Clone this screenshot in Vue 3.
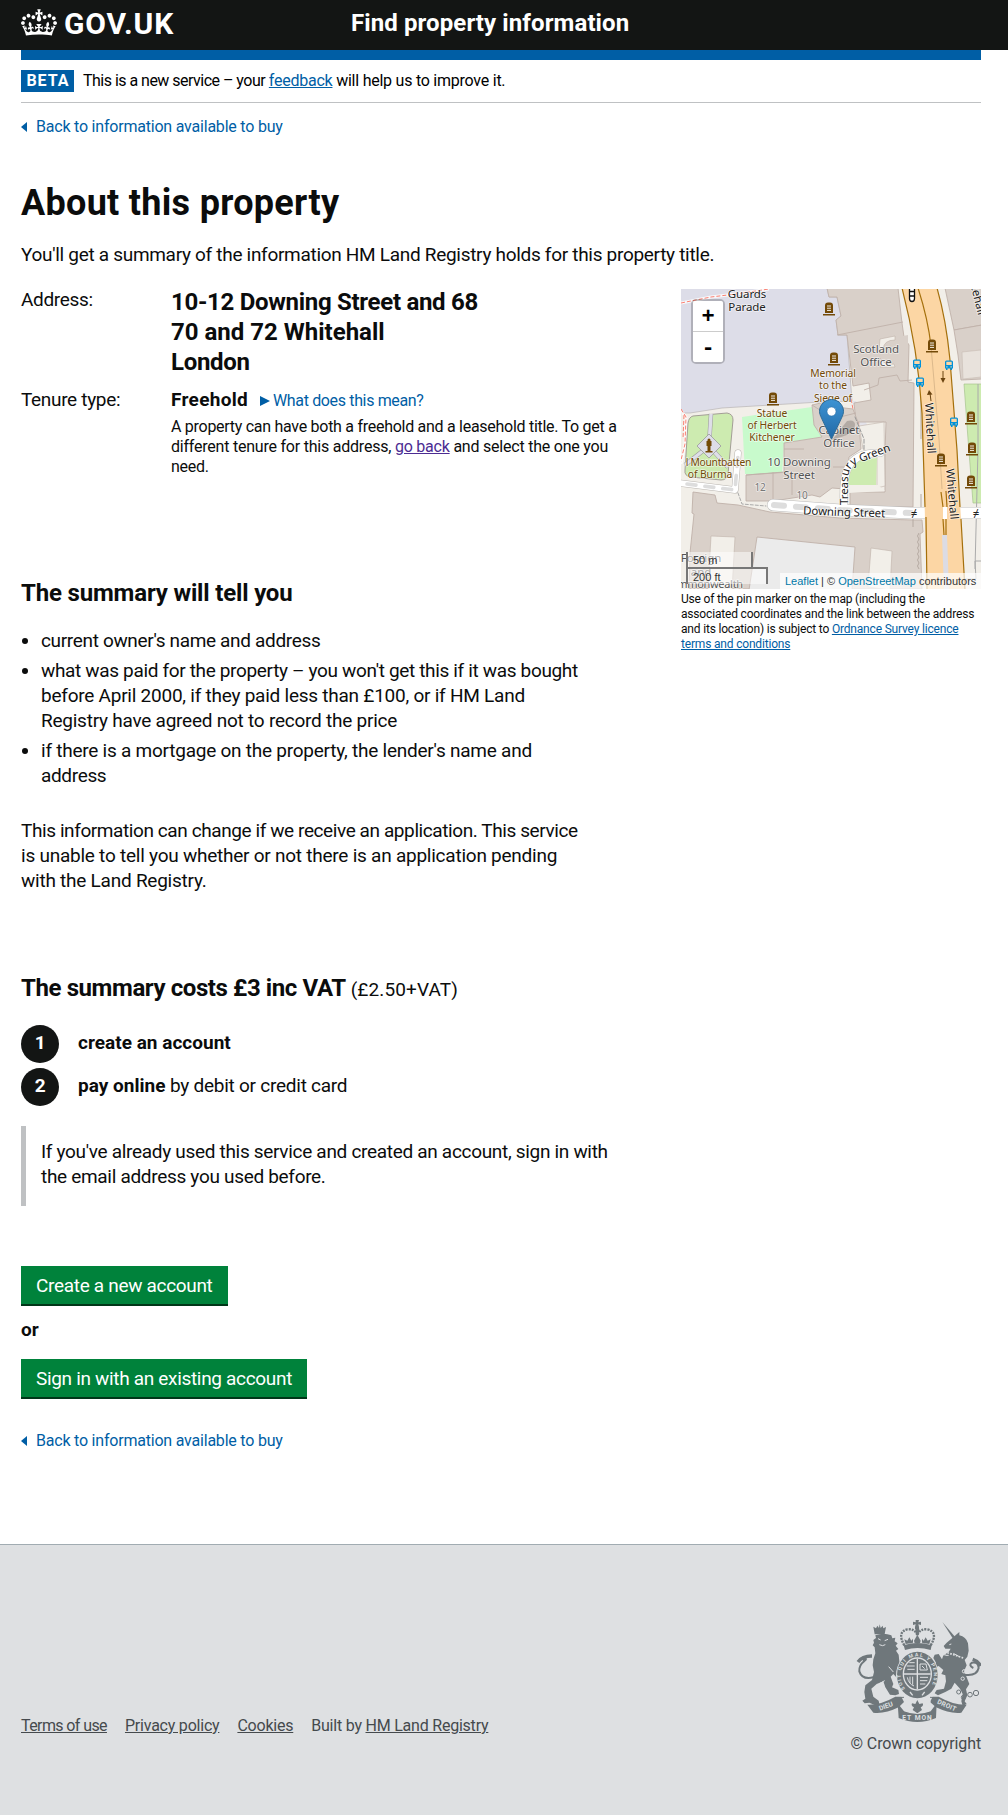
<script setup>
const memorials = [
  [148, 20], [153, 70], [92, 110], [251, 57], [290, 129], [291, 160], [260, 171], [290, 193],
]
const busStops = [[236, 75], [268, 76], [239, 93], [273, 133]]
</script>

<template>
  <header class="site-header">
    <div class="wrap header-row">
      <a class="logo" href="#">
        <svg class="crown" viewBox="0 0 132 97" width="36" height="27" aria-hidden="true">
          <path fill="#fff" d="M25 30.2c3.5 1.5 7.7-.2 9.1-3.7 1.5-3.6-.2-7.8-3.9-9.2-3.6-1.4-7.6.3-9.1 3.9-1.4 3.5.3 7.5 3.9 9zM9 39.5c3.6 1.5 7.8-.2 9.2-3.7 1.5-3.6-.2-7.8-3.9-9.1-3.6-1.5-7.6.2-9.1 3.8-1.4 3.5.3 7.5 3.8 9zM4.4 57.2c3.5 1.5 7.7-.2 9.1-3.8 1.5-3.6-.2-7.7-3.9-9.1-3.5-1.5-7.6.3-9.1 3.8-1.4 3.5.3 7.6 3.9 9.1zm38.3-21.4c3.5 1.5 7.7-.2 9.1-3.8 1.5-3.6-.2-7.7-3.9-9.1-3.6-1.5-7.6.3-9.1 3.8-1.3 3.6.4 7.7 3.9 9.1zm64.4-5.6c-3.6 1.5-7.8-.2-9.1-3.7-1.5-3.6.2-7.8 3.8-9.2 3.6-1.4 7.7.3 9.2 3.9 1.3 3.5-.4 7.5-3.9 9zm15.9 9.3c-3.6 1.5-7.7-.2-9.1-3.7-1.5-3.6.2-7.8 3.7-9.1 3.6-1.5 7.7.2 9.2 3.8 1.5 3.5-.3 7.5-3.8 9zm4.7 17.7c-3.6 1.5-7.8-.2-9.2-3.8-1.5-3.6.2-7.7 3.9-9.1 3.6-1.5 7.7.3 9.2 3.8 1.3 3.5-.4 7.6-3.9 9.1zM89.3 35.8c-3.6 1.5-7.8-.2-9.2-3.8-1.4-3.6.2-7.7 3.9-9.1 3.6-1.5 7.7.3 9.2 3.8 1.4 3.6-.3 7.7-3.9 9.1zM69.7 17.7l8.9 4.7V9.3l-8.9 2.8c-.2-.3-.5-.6-.9-.9L72.4 0H59.6l3.5 11.2c-.3.3-.6.5-.9.9l-8.8-2.8v13.1l8.8-4.7c.3.3.6.7.9.9l-5 15.4v.1c-.2.8-.4 1.6-.4 2.4 0 4.1 3.1 7.5 7 8.1h.2c.3 0 .7.1 1 .1.4 0 .7 0 1-.1h.2c4-.6 7.1-4.1 7.1-8.1 0-.8-.1-1.7-.4-2.4V34l-5.1-15.4c.4-.2.7-.6 1-.9zM66 92.8c16.9 0 32.8 1.1 47.1 3.2 4-16.9 8.9-26.7 14-33.5l-9.6-3.4c1 4.9 1.1 7.2 0 10.2-1.5-1.4-3-4.3-4.2-8.7L108.6 76c2.8-2 5-3.2 7.5-3.3-4.4 9.4-10 11.9-13.6 11.2-4.3-.8-6.3-4.6-5.6-7.9 1-4.7 5.7-5.9 8-.5 4.3-8.7-3-11.4-7.6-8.8 7.1-7.2 7.9-13.5 2.1-21.1-8 6.1-8.1 12.3-4.5 20.8-4.7-5.4-12.1-2.5-9.5 6.2 3.4-5.2 7.9-2 7.2 3.1-.6 4.3-6.4 7.8-13.5 7.2-10.3-.9-10.9-8-11.2-13.8 2.5-.5 7.1 1.8 11 7.3L80.2 60c-4.1 4.4-8 5.3-12.3 5.4 1.4-4.4 8-11.6 8-11.6H55.5s6.4 7.2 7.9 11.6c-4.2-.1-8-1-12.3-5.4l1.4 16.4c3.9-5.5 8.5-7.7 10.9-7.3-.3 5.8-.9 12.8-11.1 13.8-7.2.6-12.9-2.9-13.5-7.2-.7-5 3.8-8.3 7.1-3.1 2.7-8.7-4.6-11.6-9.4-6.2 3.7-8.5 3.6-14.7-4.6-20.8-5.8 7.6-5 13.9 2.2 21.1-4.7-2.6-11.9.1-7.7 8.8 2.3-5.5 7.1-4.2 8.1.5.7 3.3-1.3 7.1-5.7 7.9-3.5.7-9-1.8-13.5-11.2 2.5.1 4.7 1.3 7.5 3.3l-4.7-15.4c-1.2 4.4-2.7 7.2-4.3 8.7-1.1-3-.9-5.3 0-10.2l-9.5 3.4c5 6.9 9.9 16.7 14 33.5 14.8-2.1 30.8-3.2 47.7-3.2z" />
        </svg>
        <span class="logo-text">GOV.UK</span>
      </a>
      <span class="service-name">Find property information</span>
    </div>
  </header>

  <div class="wrap">
    <div class="blue-bar"></div>
    <div class="phase-banner">
      <strong class="phase-tag">BETA</strong>
      <span><span class="snug">This is a new service – your</span> <a href="#">feedback</a> will help us to improve it.</span>
    </div>
    <a class="back-link back-top" href="#">Back to information available to buy</a>

    <main>
      <h1>About this property</h1>
      <p class="intro">You'll get a summary of the information HM Land Registry holds for this property title.</p>

      <div class="property">
        <dl class="facts">
          <dt>Address:</dt>
          <dd class="address">10-12 Downing Street and 68<br><span class="line-2">70 and 72 Whitehall</span><br>London</dd>
          <dt class="tenure-label">Tenure type:</dt>
          <dd class="tenure">
            <div class="tenure-line">
              <b>Freehold</b>
              <a class="disclosure" href="#"><i class="caret"></i>What does this mean?</a>
            </div>
            <p class="tenure-help">A property can have both a freehold and a leasehold title. To get a<br><span class="loose">different tenure for this address, <a class="visited" href="#">go back</a> and select the one you</span><br>need.</p>
          </dd>
        </dl>

        <aside class="map-col">
          <div class="map">
            <svg class="tiles" viewBox="0 0 300 300" width="300" height="300">
              <rect width="300" height="300" fill="#f2efe9" />
              <!-- parade ground -->
              <path fill="#dddde8" stroke="#b9b4b4" stroke-width=".7" d="M-1-1H146L148 8 156 8 160 27 155 31 157 46 166 46 171 112 139 113 41 119 9 124-1 124z" />
              <path fill="#dddde8" d="M171 112h4l14 30-2 15-5-12z" opacity=".7" />
              <g fill="none" stroke="#fff" stroke-width="3" opacity=".8">
                <path d="M0 14 30 8 55 5 88 0M0 122 5 128 4 155 0 175" />
              </g>
              <g fill="none" stroke="#fa8072" stroke-width="1" stroke-dasharray="4 2">
                <path d="M0 14 30 8 55 5 88 0M0 120 5 128 4 155-1 175M3 126 2 150" />
                <path d="M170 110 173 125 178 135" />
              </g>
              <!-- garden -->
              <path fill="#cdebb0" stroke="#a39e96" stroke-width="1" d="M12 127 46 124Q52 125 52 131L47 185Q46 191 40 191L10 188Q3 187 4 181L7 134Q8 128 12 127z" />
              <g fill="none" stroke="#9b9b9b" stroke-width="4.4"><path d="M30 125 28 157 4 176M28 157 47 178" /></g>
              <g fill="none" stroke="#dedee8" stroke-width="3.4"><path d="M30 125 28 157 4 176M28 157 47 178" /></g>
              <path fill="#dddde8" stroke="#999" stroke-width=".8" d="M28 145 40 157 28 169 16 157z" />
              <path fill="#734a08" d="M26.500 151a1.500 1.500 0 0 1 3 0v1h1v5h-1v5h2v1.500h-7V162h2v-5h-1v-5h1z" />
              <!-- lawns -->
              <path fill="#c8facc" d="M61 128 131 118 134 136 141 148 103 154 101 185 64 185z" />
              <path fill="#cdebb0" stroke="#9dbc85" stroke-width=".6" d="M283 95H301V214H292L287 150z" />
              <path fill="none" stroke="#aaa" d="M297 95 297 160 296 200 294 280M284 290 295 290 294 272 300 272" />

              <!-- buildings -->
              <g fill="#d9d0c9" stroke="#c0b1a9" stroke-width=".9">
                <path d="M146-1 148 8 156 8 160 27 155 31 157 46 166 46 172 97 188 94 190 111 173 114 175 133 205 133 204 163 204 203 196 203 169 203 169 218 232 218 233 94 227 93 228 56 223 48 221 34 217-1z" />
                <path d="M131 116 144 113 155 118 172 120 178 136 180 160 168 168 164 200 151 199 139 208 131 206 92 212 65 212 65 186 103 183 103 154 141 148 133 136z" />
                <path d="M12 203 34 206 36 214 57 216 89 223 159 229 232 231 241 231 242 243 239 245 241 300 8 300 9 264 13 225 11 224z" />
                <path d="M264-1 273 41 301 36V-1z" />
                <path d="M273 41 277 66 280 91 301 90V36z" />
                <path fill="none" d="M156 46 222 33M183 101 197 96 198 89 216 86 219 92 231 91M92 183V212M111 183V206M65 186 108 183M155 129 175 124M152 178 166 178M131 116 150 128M123 160 103 160" />
              </g>
              <path fill="#d9d0c9" d="M222 47l5-1v10l-5 1z" />
              <g fill="#f2efe9" stroke="#c0b1a9" stroke-width=".6">
                <path d="M178 137 203 133 204 197 196 199 196 168 182 160z" />
                <path d="M30 247 54 248 51 301H27z" />
                <path d="M190 259 211 262 209 301 187 298z" />
                <path d="M199 50 214 47 214 51Q203 51 202 60L198 61zM199 69Q204 77 213 75L214 78 199 78z" />
                <path d="M281 63 300 61V88L282 90z" opacity=".6" />
                <path stroke="none" d="M166 197 197 196 204 202 168 204z" />
              </g>
              <path fill="#cdebb0" d="M168 172 196 169 195 196 167 196z" />
              <path fill="#ebebeb" stroke="#c0b1a9" stroke-width=".9" d="M76 248 174 258 171 301H68z" />
              <path fill="none" stroke="#b5aaa2" d="M232 225V238M240 94V150M240 205V220M238 244q-3 3 0 6q-3 3 0 6q-3 3 0 6q-3 3 0 6q-3 3 0 6q-3 3 0 6" />

              <!-- footways -->
              <g fill="none" stroke-linecap="round" stroke-linejoin="round">
                <path stroke="#b9b5b0" stroke-width="7" d="M-2 194 54 201 57 164" />
                <path stroke="#fff" stroke-width="6" d="M-2 194 54 201 57 164" />
                <path stroke="#ddd" stroke-width="3.600" stroke-dasharray="9 9" d="M6 195 54 201 57 166" />
                <path stroke="#aaa" stroke-width="1" stroke-dasharray="3 2" d="M57 204 61 215 85 217" />
                <path stroke="#999" stroke-width="1" stroke-dasharray="4 2" d="M174 128 183 150 183 160" />
              </g>

              <!-- Downing Street and Treasury Green -->
              <g fill="none" stroke-linecap="round">
                <path stroke="#bbb" stroke-width="12" d="M92 216 160 221 230 224H301" />
                <path stroke="#bbb" stroke-width="8" d="M163 218Q161 185 170 174T199 164" />
                <path stroke="#fff" stroke-width="7" d="M163 218Q161 185 170 174T199 164" />
                <path stroke="#fff" stroke-width="11" d="M92 216 160 221 230 224H301" />
                <path stroke="#ddd" stroke-width="6" stroke-dasharray="10 12" d="M93 216 160 221 230 224" />
              </g>

              <!-- Whitehall -->
              <path fill="#fcd6a4" d="M221-1Q237 60 241 124L246 301H284L276 161 269 71Q265 30 256-1z" />
              <path fill="none" stroke="#a5700c" stroke-width="1.200" d="M221-1Q237 60 241 124L244 218M245 228 246 301M256-1Q265 30 269 71L276 161 279 218M280 230 284 301M237-1Q247 30 250 57M260 203 262 218M265 202 266 218M262 230 263 246M265 230 265 246" />
              <path fill="none" stroke="#dcb98c" stroke-width="1" d="M250 57 258 150 261 200" />
              <path fill="#dcdce4" d="M261 246 266 246 268 301 263 301z" />
              <path fill="#fff" d="M262 218h4v12h-4z" />

              <!-- point icons -->
              <g v-for="([x, y], i) in memorials" :key="'m' + i" :transform="`translate(${x} ${y})`">
                <path fill="#734a08" d="M-4-3.500Q-4-6.500-1-6.500H1Q4-6.500 4-3.500V4H-4zM-6 5H6V6.500H-6z" />
                <path stroke="#fff" stroke-width=".9" d="M-2-3H2M-2-.8H2M-2 1.400H2" />
              </g>
              <g v-for="([x, y], i) in busStops" :key="'b' + i" :transform="`translate(${x} ${y})`">
                <path fill="#0092da" d="M-4-3Q-4-4.500-2.500-4.500H2.500Q4-4.500 4-3V3.500H3V5H1.500V3.500H-1.500V5H-3V3.500H-4z" />
                <path fill="#fcd6a4" d="M-2.700-3.200H2.700V0H-2.700zM-2.700 1.200h1.200v1.200h-1.200zM1.500 1.200h1.200v1.200h-1.200z" />
              </g>
              <g stroke="#6b4410" fill="#6b4410"><path d="M262 82V90" /><path stroke="none" d="M259.500 89h5L262 94z" /><path d="M250 112 249 104" /><path stroke="none" d="M246 106l2-5 3.500 4.500z" /></g>
              <g fill="#fff" stroke="#111" stroke-width="1.300"><path d="M228.500-1V9.500q0 3 2.500 3t2.500-3V-1z" /><path fill="none" d="M228.500 2.500h5M228.500 7h5" /></g>

              <!-- labels -->
              <g class="lbl dark">
                <text x="66" y="8.500">Guards</text><text x="66" y="22">Parade</text>
                <text x="163" y="227" transform="rotate(2 163 227)">Downing Street</text>
                <text transform="translate(244 114) rotate(87)" class="start long">Whitehall</text>
                <text transform="translate(265 180) rotate(85)" class="start long">Whitehall</text>
                <text transform="translate(285 -22) rotate(76)" class="start">Whitehall</text>
                <path id="tg" fill="none" stroke="none" d="M167 216V192Q167 177 178 174L215 160" />
                <text class="start"><textPath href="#tg">Treasury Green</textPath></text>
                <text x="233" y="228">≠</text><text x="295" y="228">≠</text>
              </g>
              <g class="lbl grey">
                <text x="195" y="64">Scotland</text><text x="195" y="77">Office</text>
                <text x="158" y="145">Cabinet</text><text x="158" y="158">Office</text>
                <text x="118" y="177">10 Downing</text><text x="118" y="190">Street</text>
                <text x="20" y="273">Foreign</text><text x="20" y="287">and</text><text x="29" y="299" class="small">mmonwealth</text>
              </g>
              <g class="lbl num"><text x="79" y="202">12</text><text x="121" y="210">10</text></g>
              <g class="lbl brown">
                <text x="152" y="88">Memorial</text><text x="152" y="100">to the</text><text x="152" y="113">Siege of</text><text x="152" y="125">Kut</text>
                <text x="91" y="128">Statue</text><text x="91" y="140">of Herbert</text><text x="91" y="152">Kitchener</text>
                <text x="70" y="177" class="end">l Mountbatten</text><text x="29" y="189">of Burma</text>
              </g>

              <!-- pin -->
              <defs><linearGradient id="pin" x1="0" y1="0" x2="0" y2="1"><stop offset="0" stop-color="#3d93d3" /><stop offset="1" stop-color="#2269a5" /></linearGradient></defs>
              <g transform="translate(138 110)">
                <path fill="#000" opacity=".18" d="M13 41 28 22Q36 20 36 26T28 36z" />
                <path fill="url(#pin)" stroke="#2e6c97" d="M12.500.5C5.900.5.5 5.900.5 12.300c0 2.200.9 4.500 2 6.800L12.500 40.200l10-21.100c1.100-2.300 2-4.600 2-6.800C24.500 5.900 19.100.5 12.500.5z" />
                <circle cx="12.500" cy="12.500" r="4.500" fill="#fff" stroke="#2a6fa8" stroke-width=".6" />
              </g>
            </svg>

            <div class="zoom"><a href="#">+</a><a href="#">-</a></div>
            <div class="scale"><span class="metric">50 m</span><span class="imperial">200 ft</span></div>
            <div class="credit"><a href="#">Leaflet</a> | © <a href="#">OpenStreetMap</a> contributors</div>
          </div>
          <p class="map-note">Use of the pin marker on the map (including the<br>associated coordinates and the link between the address<br>and its location) is subject to <a href="#">Ordnance Survey licence<br>terms and conditions</a></p>
        </aside>
      </div>

      <section class="tells">
        <h2>The summary will tell you</h2>
        <ul>
          <li>current owner's name and address</li>
          <li>what was paid for the property – you won't get this if it was bought<br><span class="loose">before April 2000, if they paid less than £100, or if HM Land<br>Registry have agreed not to record the price</span></li>
          <li><span class="loose">if there is a mortgage on the property, the lender's name and</span><br>address</li>
        </ul>
        <p><span class="tight">This information can change if we receive an application. This service</span><br><span class="loose">is unable to tell you whether or not there is an application pending<br>with the Land Registry.</span></p>
      </section>

      <section class="costs">
        <h2>The summary costs £3 inc VAT <span>(£2.50+VAT)</span></h2>
        <ol class="steps">
          <li><span class="step-no">1</span><span><b>create an account</b></span></li>
          <li><span class="step-no">2</span><span><b>pay online</b> by debit or credit card</span></li>
        </ol>
        <p class="inset">If you've already used this service and created an account, sign in with<br>the email address you used before.</p>
      </section>

      <div class="actions">
        <button type="button">Create a new account</button>
        <b class="or">or</b>
        <button type="button">Sign in with an existing account</button>
      </div>
      <a class="back-link" href="#">Back to information available to buy</a>
    </main>
  </div>

  <footer>
    <div class="wrap footer-row">
      <nav class="footer-links">
        <a class="terms" href="#">Terms of use</a>
        <a href="#">Privacy policy</a>
        <a href="#">Cookies</a>
        <span>Built by <a href="#">HM Land Registry</a></span>
      </nav>
      <div class="crest-col">
        <svg class="crest" viewBox="78 60 375 306" width="125" height="102" aria-hidden="true">
          <g fill="#6f777b">
            <!-- central crown -->
            <path d="M257 60h10l-2 7 8-2v10l-8-2 2 8v6h-12v-6l2-8-8 2V65l8 2z" />
            <path d="M256 86h12l-2 20h-8zM221 136Q262 122 305 136L302 150Q262 138 225 150z" />
            <path d="M232 122l6-10 6 10 5-6v12l-22 4-4-14zM293 122l-6-10-6 10-5-6v12l22 4 4-14zM252 122l10-18 10 18-2 8h-16z" />
            <!-- lion -->
            <path d="M130 80l8 5 4-8 5 7 2-11 3 11 6-7 2 8 8-4-4 21-30 1z" />
            <path d="M136 106Q160 96 184 106L187 115 196 113 194 124 203 130 197 137 205 147 198 152 206 164 208 184 212 196 205 212 212 224 203 236 190 222 182 230 190 252 186 262 205 270 207 282 196 286 180 284 166 262 160 244 140 252 124 266 130 290 146 302 148 312 136 316 118 308 104 310 97 302 106 296 103 276 106 256 126 240 132 216 128 196 130 178 136 160 134 142 128 136 132 128 130 120 138 114z" />
            <!-- unicorn -->
            <path d="M337 66 378 114 370 118z" />
            <path d="M350 128 374 108 388 96 388 106Q408 110 414 130L416 152 412 170 404 180 410 196 402 214 410 232 418 252 408 268 412 286 404 304 410 312 398 318 394 304 398 282 390 266 374 248 364 266 346 276 324 286 314 280 320 270 342 266 348 244 346 226 334 222 340 210 326 198 312 204 306 194 318 188 310 174 314 164 326 162 336 178 340 166 356 156 362 146 346 146 341 138z" />
            <!-- ribbon -->
            <path d="M112 314Q150 316 196 290L214 290 222 306 206 322Q165 342 130 338zM410 314Q372 316 326 290L308 290 300 306 318 322Q360 342 394 338z" />
            <path d="M203 310 222 334Q262 350 302 334L320 310 318 354Q262 378 206 354z" />
          </g>
          <path fill="#dee0e2" d="M222 302Q262 316 302 302L298 334Q262 344 226 334z" />
          <path fill="#6f777b" d="M262 300l6 12 10-2q4 8-6 12l4 8-14 10-14-10 4-8q-10-4-6-12l10 2z" />
          <g fill="none" stroke="#6f777b">
            <path stroke-width="7" stroke-dasharray="6 3" d="M223 136Q200 96 232 88 254 86 262 104M302 136Q326 96 292 88 270 86 262 104" />
            <path stroke-width="6" d="M130 232Q96 240 88 214 86 196 104 182 114 172 98 180M402 224Q440 230 446 204 444 184 426 188 414 196 430 204" />
            <path stroke-width="10" d="M84 186Q96 168 126 168M428 178Q446 184 452 198" />
            <path stroke-width="3" d="M206 310Q200 290 222 292M318 310Q322 290 300 292" />
            <g stroke-width="3">
              <circle cx="386" cy="276" r="6" /><circle cx="400" cy="292" r="6" /><circle cx="420" cy="284" r="7" /><circle cx="438" cy="279" r="8" /><circle cx="404" cy="254" r="6" />
            </g>
          </g>
          <!-- shield and garter -->
          <ellipse cx="262" cy="226" rx="64" ry="72" fill="#dee0e2" />
          <ellipse cx="262" cy="225" rx="61" ry="70" fill="#6f777b" />
          <ellipse cx="262" cy="222" rx="44" ry="50" fill="#dee0e2" />
          <ellipse cx="262" cy="222" rx="40" ry="46" fill="#6f777b" />
          <path stroke="#dee0e2" stroke-width="4" d="M262 176V268M222 222H302" />
          <g fill="none" stroke="#dee0e2" stroke-width="3">
            <path d="M230 198h24M232 208h22M238 188h16M270 192h18l4 18h-22zM276 198l8 8M232 232q4 20 20 26M240 230v20M248 230v24M270 232h24M270 242h22M270 252h16" />
          </g>
          <path id="garter" fill="none" d="M226 266A50 57 0 1 1 298 266" />
          <text class="garter-text"><textPath href="#garter" textLength="238">SOIT QUI MAL Y PENSE</textPath></text>
          <path d="M240 276l8 10M284 276l-8 10" stroke="#dee0e2" stroke-width="4" />
          <!-- highlights -->
          <g fill="none" stroke="#dee0e2" stroke-width="3">
            <path d="M144 116l8 4M164 122l10-4M148 134q10 6 18 0M176 200l14 16M150 250l14-8M358 134l6-2M370 160l18 10M346 166h10" />
            <path stroke-width="5" stroke-dasharray="5 4" d="M352 158 400 174" />
            <circle cx="402" cy="214" r="5" /><circle cx="398" cy="236" r="5" /><circle cx="342" cy="160" r="5" />
          </g>
          <g class="scroll-text">
            <text transform="translate(150 332) rotate(-20)">DIEU</text>
            <text x="217" y="360" textLength="88">ET MON</text>
            <text transform="translate(320 310) rotate(24)" textLength="60">DROIT</text>
          </g>
        </svg>
        <span>© Crown copyright</span>
      </div>
    </div>
  </footer>
</template>

<style>
body { margin: 0; background: #fff; }
</style>

<style scoped>
* { box-sizing: border-box; }
h1, h2, p, ul, ol, dl, dd { margin: 0; padding: 0; }
.site-header, .wrap, footer { font-family: Roboto, "Liberation Sans", sans-serif; }
.wrap { margin: 0 27px 0 21px; color: #0b0c0c; font-size: 19px; line-height: 25px; letter-spacing: -.32px; }
a { color: #005ea5; }
.loose { letter-spacing: -.24px; }
.tight { letter-spacing: -.41px; }
.snug { letter-spacing: -.52px; }

.site-header { height: 50px; background: #131514; }
.header-row { display: flex; align-items: flex-start; color: #fff; }
.logo { display: flex; width: 330px; color: #fff; text-decoration: none; }
.crown { margin: 9px 7px 0 0; }
.logo-text { font-size: 30px; font-weight: 700; line-height: 30px; letter-spacing: .9px; margin-top: 9px; }
.service-name { font-size: 24px; font-weight: 700; line-height: 30px; letter-spacing: .1px; margin-top: 8px; }

.blue-bar { height: 10px; background: #005ea5; }
.phase-banner { display: flex; align-items: center; gap: 9px; height: 43px; border-bottom: 1px solid #bfc1c3; font-size: 16px; line-height: 20px; letter-spacing: -.24px; color: #000; }
.phase-tag { background: #005ea5; color: #fff; width: 53px; height: 22px; line-height: 22px; text-align: center; letter-spacing: 1px; padding-left: 1px; }

.back-link { display: flex; align-items: center; font-size: 16px; line-height: 20px; letter-spacing: -.21px; text-decoration: none; }
.back-link::before { content: ""; border: 5px solid transparent; border-left: 0; border-right: 6px solid #005ea5; margin-right: 9px; }
.back-top { margin-top: 14px; }

h1 { font-size: 36px; line-height: 40px; letter-spacing: .3px; margin-top: 46px; }
.intro { margin-top: 19px; letter-spacing: -.3px; }

.property { display: flex; justify-content: space-between; align-items: flex-start; margin-top: 20px; height: 291px; }
.facts { display: grid; grid-template-columns: 150px 460px; grid-template-rows: 100px auto; }
.address { font-size: 24px; font-weight: 700; line-height: 30px; letter-spacing: -.3px; }
.line-2 { letter-spacing: 0; }
.tenure-line { display: flex; align-items: baseline; }
.tenure-line b { letter-spacing: .3px; width: 89px; }
.disclosure { font-size: 16px; letter-spacing: -.35px; text-decoration: none; }
.caret { display: inline-block; border: 5px solid transparent; border-right: 0; border-left: 10px solid #005ea5; margin-right: 3px; }
.tenure-help { font-size: 16px; line-height: 20px; letter-spacing: -.28px; margin-top: 4px; }
.tenure-help .loose { letter-spacing: -.22px; }
.visited { color: #4c2c92; }

.map-col { width: 300px; padding-top: 2px; }
.map { position: relative; width: 300px; height: 300px; overflow: hidden; letter-spacing: 0; }
.tiles { display: block; }
.lbl text { font-family: "Noto Sans", sans-serif; font-size: 11.5px; letter-spacing: -.1px; text-anchor: middle; paint-order: stroke; stroke: rgba(255, 255, 255, .6); stroke-width: 1.6px; stroke-linejoin: round; }
.lbl text.start { text-anchor: start; }
.lbl text.long { font-size: 11.5px; letter-spacing: 0; }
.dark text { fill: #222; }
.grey text { fill: #555; }
.lbl.num text { fill: #777; font-size: 10px; }
.lbl.brown text { fill: #734a08; font-size: 10.3px; letter-spacing: -.1px; }
.lbl.brown text.end { text-anchor: end; letter-spacing: -.3px; }
.lbl text.small { font-size: 11px; letter-spacing: -.3px; }
.zoom { position: absolute; left: 10px; top: 10px; width: 34px; border: 2px solid rgba(0, 0, 0, .2); border-radius: 5px; background-clip: padding-box; }
.zoom a { display: block; height: 30px; background: #fff; color: #000; text-align: center; text-decoration: none; font: 700 22px/33px "Liberation Mono", monospace; border-radius: 0 0 2px 2px; }
.zoom a:first-child { border-radius: 2px 2px 0 0; height: 31px; border-bottom: 1px solid #ccc; }
.scale { position: absolute; left: 5px; bottom: 5px; display: flex; flex-direction: column; align-items: flex-start; font: 11px/12px "Liberation Sans", sans-serif; color: #333; }
.metric, .imperial { border: 2px solid #777; border-top: 0; background: rgba(255, 255, 255, .5); padding: 2px 5px 1px; height: 17px; }
.metric { width: 67px; }
.imperial { width: 82px; border-top: 2px solid #777; border-bottom: 0; margin-top: -2px; }
.credit { position: absolute; right: 0; bottom: 0; width: 201px; height: 16px; padding: 0 0 0 5px; background: rgba(255, 255, 255, .7); color: #333; font: 11px/17px "Liberation Sans", sans-serif; letter-spacing: 0; white-space: nowrap; }
.credit a { color: #0078a8; text-decoration: none; }
.map-note { font-size: 12px; line-height: 15px; letter-spacing: -.18px; margin-top: 3px; white-space: nowrap; }

h2 { font-size: 24px; line-height: 30px; letter-spacing: -.17px; }
ul { list-style: none; margin-top: 20px; }
ul li { position: relative; padding-left: 20px; margin-bottom: 5px; letter-spacing: -.34px; }
ul li::before { content: ""; position: absolute; left: 1px; top: 10px; width: 6px; height: 6px; border-radius: 50%; background: #0b0c0c; }
.tells p { margin-top: 30px; }
.costs { margin-top: 80px; }
.costs h2 { letter-spacing: -.4px; }
.costs h2 span { font-size: 19px; font-weight: 400; letter-spacing: .13px; }
.steps { list-style: none; margin-top: 20px; display: flex; flex-direction: column; gap: 5px; }
.steps li { display: flex; gap: 19px; line-height: 35px; letter-spacing: -.25px; height: 38px; }
.steps b { letter-spacing: .02px; }
.step-no { width: 38px; height: 38px; border-radius: 50%; background: #131514; color: #fff; font-weight: 700; text-align: center; }
.inset { border-left: 5px solid #bfc1c3; padding: 13px 0 17px 15px; margin-top: 20px; letter-spacing: -.31px; }

.actions { display: flex; flex-direction: column; align-items: flex-start; margin-top: 60px; }
button { font: 19px/25px Roboto, sans-serif; letter-spacing: -.32px; color: #fff; background: #00823b; border: 0; box-shadow: 0 2px 0 #003618; padding: 7px 15px 6px; height: 38px; }
.or { margin: 13px 0 17px; letter-spacing: 0; }
.actions + .back-link { margin-top: 34px; }

footer { margin-top: 93px; height: 271px; background: #dee0e2; border-top: 1px solid #a1acb2; }
footer .wrap { color: #454a4d; font-size: 16px; line-height: 20px; }
footer a { color: #454a4d; }
.footer-row { display: flex; justify-content: space-between; align-items: flex-end; height: 209px; }
.footer-links { display: flex; gap: 18px; margin-bottom: 18px; letter-spacing: -.22px; }
.footer-links .terms { letter-spacing: -.6px; }
.crest-col { display: flex; flex-direction: column; align-items: flex-end; letter-spacing: -.12px; }
.crest { margin-bottom: 12px; }
.garter-text { font: 700 15px Roboto, sans-serif; fill: #dee0e2; }
.scroll-text { font: 700 20px Roboto, sans-serif; fill: #dee0e2; }
</style>
